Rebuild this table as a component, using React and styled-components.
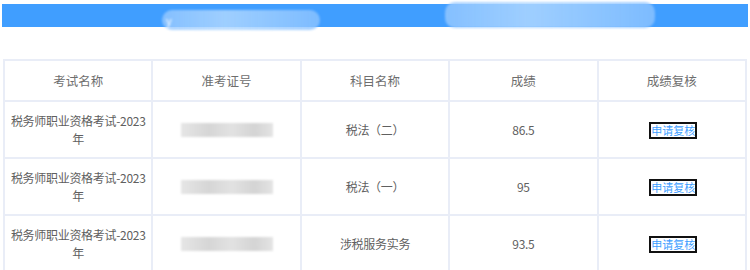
import React from "react";
import styled, { createGlobalStyle } from "styled-components";

const GlobalStyle = createGlobalStyle`
  body {
    margin: 0;
    background: #fff;
    font-family: "Noto Sans CJK SC", "Noto Sans", sans-serif;
  }
`;

const Page = styled.div`
  width: 750px;
  height: 270px;
  overflow: hidden;
  padding-top: 4px;
  box-sizing: border-box;
`;

// blurred title bar, text is smudged out in the shot
const TopBar = styled.div`
  display: flex;
  align-items: flex-start;
  gap: 125px;
  margin: 0 2px;
  padding-left: 160px;
  height: 23px;
  background: #409eff;
`;

const Smudge = styled.div`
  display: flex;
  align-items: center;
  flex-shrink: 0;
  margin-top: ${(p) => p.$top}px;
  width: ${(p) => p.$width}px;
  height: ${(p) => p.$height}px;
  padding-left: 4px;
  box-sizing: border-box;
  border-radius: 10px;
  background: linear-gradient(90deg, rgba(150, 200, 255, 0.8), rgba(175, 215, 255, 0.85) 40%, rgba(140, 195, 255, 0.8));
  filter: blur(1px);
  color: #fff;
  font-size: 11px;
`;

const Table = styled.table`
  margin: 32px 0 0 3px;
  width: 744px;
  border-collapse: collapse;
  table-layout: fixed;
  border: 2px solid #e9edf7;
  font-size: 12px;
`;

const Th = styled.th`
  height: 37px;
  border: 2px solid #e9edf7;
  color: #6e6e6e;
  font-weight: normal;
  font-size: 12.5px;
  text-align: center;
`;

const Td = styled.td`
  height: 55px;
  border: 2px solid #e9edf7;
  color: #606060;
  text-align: center;
  line-height: 18px;
  letter-spacing: -0.3px;
  padding: 0 1px;
`;

const Redacted = styled.div`
  margin: 0 auto;
  width: 92px;
  height: 14px;
  background: linear-gradient(90deg, #e6e6e6, #d6d6d6 30%, #e2e2e2 55%, #d4d4d4 80%, #e4e4e4);
  filter: blur(1.2px);
`;

const ReviewButton = styled.span`
  display: inline-block;
  margin-left: 3px;
  border: 2px solid #111;
  padding: 1px 0;
  line-height: 11px;
  letter-spacing: 0;
  color: #409eff;
  font-size: 11px;
`;

const rows = [
  { subject: "税法（二）", score: "86.5" },
  { subject: "税法（一）", score: "95" },
  { subject: "涉税服务实务", score: "93.5" },
];

export default function App() {
  return (
    <Page>
      <GlobalStyle />
      <TopBar>
        <Smudge $top={6} $width={158} $height={20}>y</Smudge>
        <Smudge $top={-2} $width={210} $height={26} />
      </TopBar>
      <Table>
        <thead>
          <tr>
            <Th>考试名称</Th>
            <Th>准考证号</Th>
            <Th>科目名称</Th>
            <Th>成绩</Th>
            <Th>成绩复核</Th>
          </tr>
        </thead>
        <tbody>
          {rows.map((r) => (
            <tr key={r.subject}>
              <Td>税务师职业资格考试-2023年</Td>
              <Td>
                <Redacted />
              </Td>
              <Td>{r.subject}</Td>
              <Td>{r.score}</Td>
              <Td>
                <ReviewButton>申请复核</ReviewButton>
              </Td>
            </tr>
          ))}
        </tbody>
      </Table>
    </Page>
  );
}
